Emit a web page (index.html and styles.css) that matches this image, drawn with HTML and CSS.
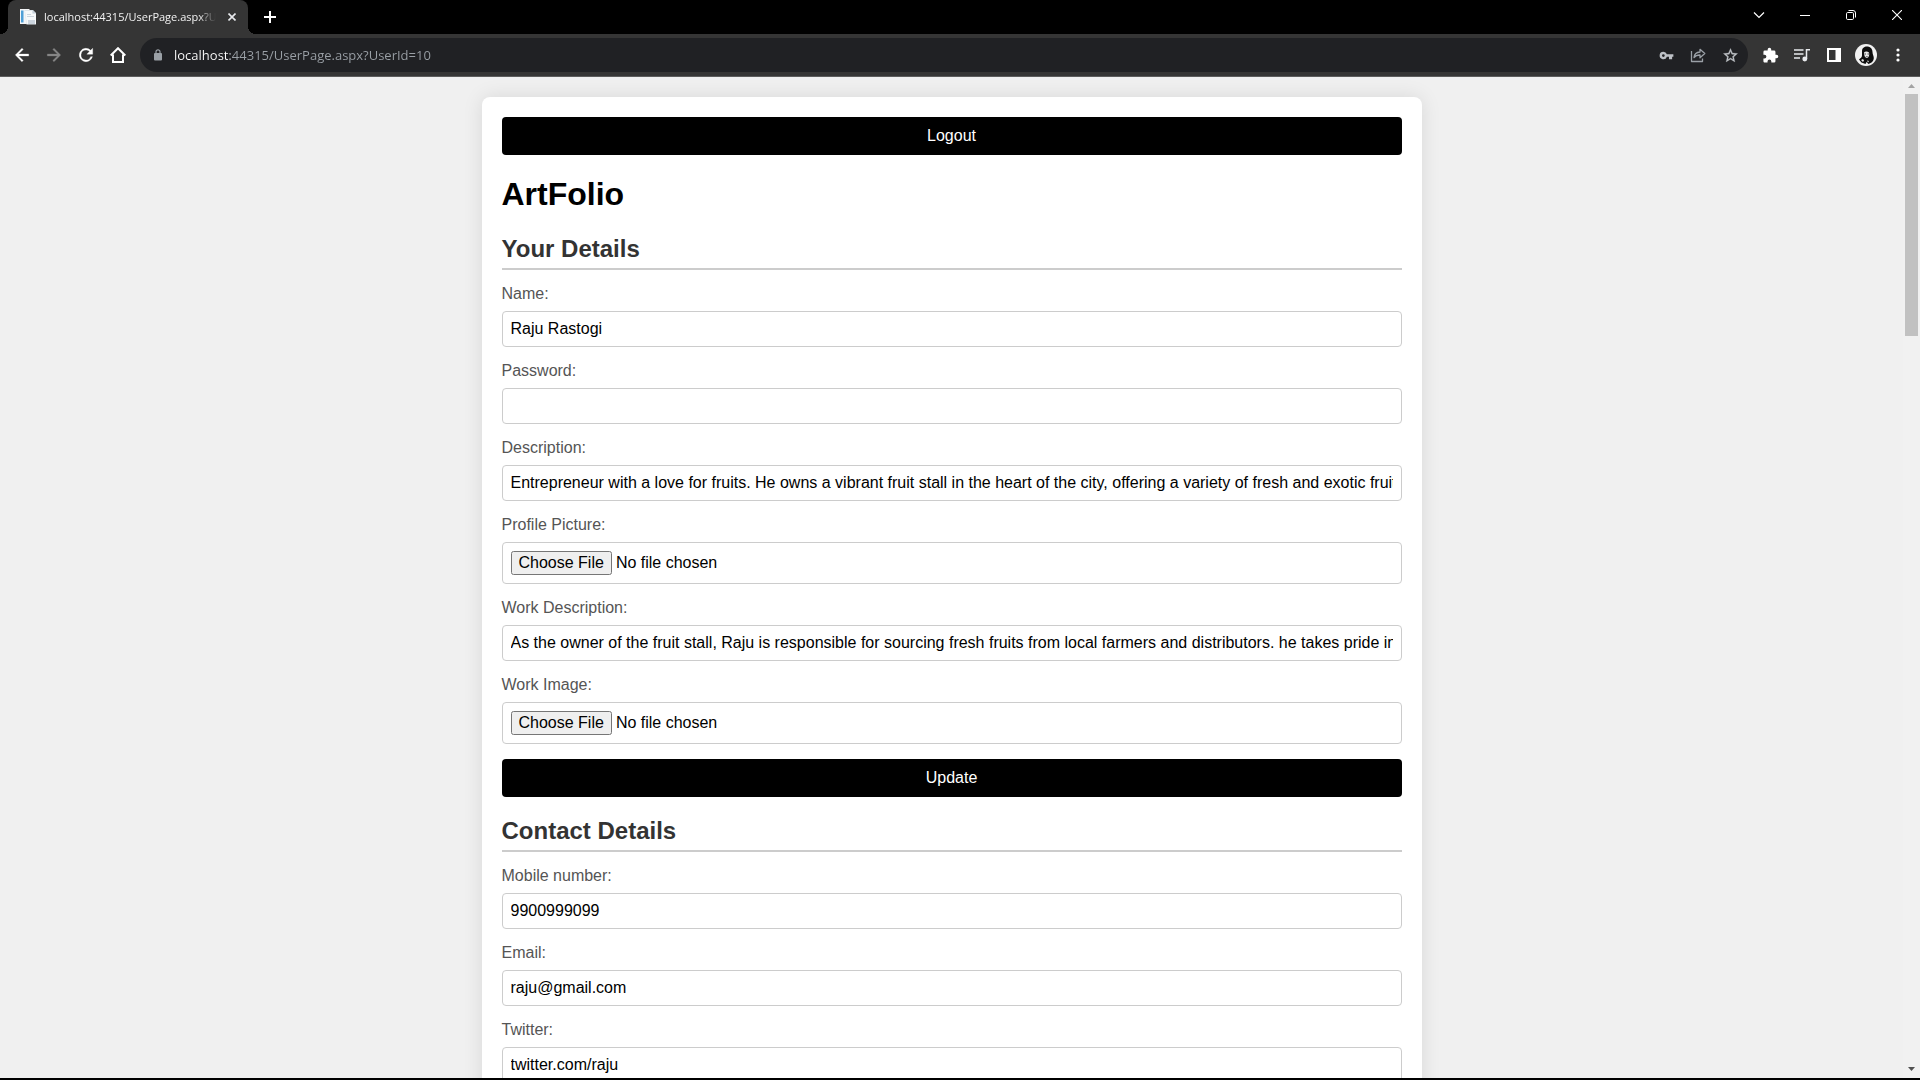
FILE: index.html
```html
<!DOCTYPE html>
<html lang="en">
<head>
<meta charset="utf-8">
<title>localhost:44315/UserPage.aspx?UserId=10</title>
<link rel="stylesheet" href="styles.css">
</head>
<body>
<header class="browser">
  <div class="tab-strip">
    <div class="tab">
      <svg class="favicon" width="16" height="16" viewBox="0 0 16 16"><path fill="#f3f5f7" d="M0 0h9.500v15H0z"/><path fill="#4f9fd6" d="M1 1.500h2.500v12H1z"/><path fill="#dfe5ea" d="M4.500 1h8.500l3 3v11.500h-9.500z"/><path fill="#f7f9fa" d="M5 2h7.500v2.500H16V15H7z"/><path fill="#b9c6d1" d="M12.500 1v3.500H16zM7 5h4v1H7zM7 7h7v1H7zM8 11h7v4H8z" opacity=".7"/></svg>
      <span class="tab-title">localhost:44315/UserPage.aspx?UserId=10</span>
      <button class="tab-close" aria-label="Close tab"><svg width="8" height="8" viewBox="0 0 8 8" fill="none" stroke="#e8eaed" stroke-width="1.600"><path d="M.5.5l7 7M7.500.5l-7 7"/></svg></button>
    </div>
    <button class="new-tab" aria-label="New tab"><svg width="12" height="12" viewBox="0 0 12 12" fill="none" stroke="#fff" stroke-width="2"><path d="M6 0v12M0 6h12"/></svg></button>
    <div class="window-controls">
      <button aria-label="Search tabs"><svg width="12" height="12" viewBox="0 0 12 12" fill="none" stroke="#fff" stroke-width="1.200"><path d="M1 3.500l5 5 5-5"/></svg></button>
      <button aria-label="Minimize"><svg width="10" height="10" viewBox="0 0 10 10" fill="none" stroke="#fff"><path d="M0 5.500h10"/></svg></button>
      <button aria-label="Restore"><svg width="10" height="10" viewBox="0 0 10 10" fill="none" stroke="#fff"><rect x=".5" y="2.500" width="7" height="7" rx="1.200"/><path d="M2.500.5H7A2.500 2.500 0 0 1 9.500 3v4.500"/></svg></button>
      <button aria-label="Close"><svg width="10" height="10" viewBox="0 0 10 10" fill="none" stroke="#fff" stroke-width="1.100"><path d="M0 0l10 10M10 0L0 10"/></svg></button>
    </div>
  </div>
  <nav class="toolbar">
    <button class="tool" aria-label="Back"><svg width="20" height="20" viewBox="0 0 24 24" fill="#fff" stroke="#fff" stroke-width=".4"><path d="M20 10.900H7.900l5.500-5.500L12 4l-8 8 8 8 1.400-1.400-5.500-5.500H20z"/></svg></button>
    <button class="tool" aria-label="Forward"><svg width="20" height="20" viewBox="0 0 24 24" fill="#868686" stroke="#868686" stroke-width=".4"><path d="M4 10.900h12.100l-5.500-5.500L12 4l8 8-8 8-1.400-1.400 5.500-5.500H4z"/></svg></button>
    <button class="tool" aria-label="Reload"><svg width="20" height="20" viewBox="0 0 24 24" fill="#fff"><path d="M17.650 6.350A8 8 0 1 0 19.730 14h-2.080A6 6 0 1 1 12 6c1.660 0 3.140.69 4.220 1.780L13 11h7V4z" stroke="#fff" stroke-width=".4"/></svg></button>
    <button class="tool" aria-label="Home"><svg width="16" height="16" viewBox="0 0 16 16" fill="none" stroke="#fff" stroke-width="2"><path d="M.7 8.500L8 1.200l7.300 7.300M3 7.500V15h10V7.500"/></svg></button>
    <div class="omnibox">
      <svg width="8" height="12" viewBox="0 0 8 12"><rect y="4" width="8" height="7.500" rx="1" fill="#9aa0a6"/><path d="M2 4.500V2.800a2 2 0 0 1 4 0v1.700" fill="none" stroke="#9aa0a6" stroke-width="1.200"/></svg>
      <input class="url" type="text" aria-label="Address" value="localhost:44315/UserPage.aspx?UserId=10">
      <button class="tool" aria-label="Passwords"><svg width="15" height="15" viewBox="0 0 24 24" fill="#bdc1c6"><path d="M12.650 10A6 6 0 0 0 7 6a6 6 0 1 0 5.650 8H16v4h5v-4h2v-4zM7 14.200a2.200 2.200 0 1 1 0-4.400 2.200 2.200 0 0 1 0 4.400z"/></svg></button>
      <button class="tool" aria-label="Share"><svg width="16" height="16" viewBox="0 0 16 16" fill="none" stroke="#9aa0a6" stroke-width="1.300"><path d="M1.500 4v10.500h11v-3M4 10.500c.4-3.500 2.500-5.300 6-5.500V2.300L14.800 6.500 10 10.700V8c-2.700 0-4.600.7-6 2.500z" stroke-linejoin="round"/></svg></button>
      <button class="tool" aria-label="Bookmark"><svg width="17" height="17" viewBox="0 0 24 24" fill="#bdc1c6" stroke="#bdc1c6" stroke-width=".4"><path d="M22 9.240l-7.190-.62L12 2 9.190 8.630 2 9.240l5.460 4.730L5.820 21 12 17.270 18.180 21l-1.630-7.030zM12 15.400l-3.760 2.270 1-4.280-3.320-2.880 4.380-.38L12 6.100l1.710 4.040 4.380.38-3.320 2.880 1 4.280z"/></svg></button>
    </div>
    <button class="tool" aria-label="Extensions"><svg width="17" height="17" viewBox="0 0 24 24" fill="#fff"><path d="M20.500 11H19V7a2 2 0 0 0-2-2h-4V3.500a2.500 2.500 0 0 0-5 0V5H4a2 2 0 0 0-2 2v3.800h1.500a2.700 2.700 0 0 1 0 5.400H2V20c0 1.100.9 2 2 2h3.800v-1.500a2.700 2.700 0 0 1 5.400 0V22H17a2 2 0 0 0 2-2v-4h1.500a2.500 2.500 0 0 0 0-5z"/></svg></button>
    <button class="tool" aria-label="Media controls"><svg width="16" height="14" viewBox="0 0 16 14" fill="none" stroke="#e8eaed" stroke-width="1.500"><path d="M0 2h9.500M0 6h9.500M0 10h6M12.500 11V1.800H16"/><circle cx="10.800" cy="11" r="1.700" fill="#e8eaed"/></svg></button>
    <button class="tool" aria-label="Side panel"><svg width="14" height="14" viewBox="0 0 14 14"><path fill="#fff" fill-rule="evenodd" d="M0 0h14v14H0zM2 2v10h6.500V2z"/></svg></button>
    <button class="tool" aria-label="Profile"><svg width="22" height="22" viewBox="0 0 22 22"><circle cx="11" cy="11" r="11" fill="#f1f1f1"/><path fill="#0c0c0c" d="M7 7c0-3.500 3-5 6-4.500 3 .5 4.500 3 4.500 5.500 0 2 .8 3 1.200 5 .4 2.500-.7 4.500-2.200 5.500l-3 1.500-2-2-1 2-4-1.500-2.500-3c1.500-1.500 3-2 3-4z"/><path fill="#e6e6e6" d="M9 8.500c1-1.500 3.500-1.500 5 0 .7 2.500 0 5-2 5.500-2 0-3-2.500-3-5.500zM6 16l2-1 1 1.500-1 1.500zM12 16.500l2 .5-1 1.500z"/><path fill="#444" d="M9.500 9.500h1.500v1H9.500zM12.500 9.500H14v1h-1.500zM10.500 12h2.500l-1 1z"/></svg></button>
    <button class="tool" aria-label="Menu"><svg width="4" height="14" viewBox="0 0 4 14" fill="#fff"><circle cx="2" cy="2" r="1.600"/><circle cx="2" cy="7" r="1.600"/><circle cx="2" cy="12" r="1.600"/></svg></button>
  </nav>
</header>
<div class="viewport">
  <main class="page">
    <form class="card">
      <button class="action" type="button">Logout</button>
      <h1>ArtFolio</h1>
      <section>
        <h2>Your Details</h2>
        <label for="name">Name:</label>
        <input class="field" id="name" type="text" value="Raju Rastogi">
        <label for="password">Password:</label>
        <input class="field" id="password" type="password">
        <label for="description">Description:</label>
        <input class="field" id="description" type="text" value="Entrepreneur with a love for fruits. He owns a vibrant fruit stall in the heart of the city, offering a variety of fresh and exotic fruits">
        <label for="picture">Profile Picture:</label>
        <input class="field" id="picture" type="file">
        <label for="work">Work Description:</label>
        <input class="field" id="work" type="text" value="As the owner of the fruit stall, Raju is responsible for sourcing fresh fruits from local farmers and distributors. he takes pride in">
        <label for="work-image">Work Image:</label>
        <input class="field" id="work-image" type="file">
        <button class="action" type="button">Update</button>
      </section>
      <section>
        <h2>Contact Details</h2>
        <label for="mobile">Mobile number:</label>
        <input class="field" id="mobile" type="text" value="9900999099">
        <label for="email">Email:</label>
        <input class="field" id="email" type="text" value="raju@gmail.com">
        <label for="twitter">Twitter:</label>
        <input class="field" id="twitter" type="text" value="twitter.com/raju">
      </section>
    </form>
  </main>
  <div class="scrollbar">
    <svg width="7" height="4" viewBox="0 0 7 4" fill="#a3a3a3"><path d="M0 4l3.500-4L7 4z"/></svg>
    <div class="track"><div class="thumb"></div></div>
    <svg width="7" height="4" viewBox="0 0 7 4" fill="#505050"><path d="M0 0h7L3.500 4z"/></svg>
  </div>
</div>
</body>
</html>
```
FILE: styles.css
```css
* { box-sizing: border-box; }

body {
  margin: 0;
  height: 100vh;
  display: flex;
  flex-direction: column;
  overflow: hidden;
  background: #000;
  border-bottom: 2px solid #000;
  font-family: "Liberation Sans", Arial, sans-serif;
  font-size: 16px;
  line-height: 18px;
}

button, input { font: inherit; }

.browser {
  flex: none;
  font-family: "Open Sans", "Segoe UI", sans-serif;
}

.browser button {
  display: flex;
  align-items: center;
  justify-content: center;
  padding: 0;
  border: 0;
  background: none;
}

.tab-strip {
  display: flex;
  height: 34px;
  padding-left: 8px;
}

.tab {
  position: relative;
  display: flex;
  align-items: center;
  width: 240px;
  padding: 0 8px 0 12px;
  border-radius: 8px 8px 0 0;
  background: #353535;
}

.tab::before,
.tab::after {
  content: "";
  position: absolute;
  bottom: 0;
  width: 8px;
  height: 8px;
}

.tab::before {
  left: -8px;
  background: radial-gradient(circle at 0 0, #000 8px, #353535 8px);
}

.tab::after {
  right: -8px;
  background: radial-gradient(circle at 100% 0, #000 8px, #353535 8px);
}

.favicon { flex: none; margin-right: 8px; }

.tab-title {
  flex: 1;
  overflow: hidden;
  white-space: nowrap;
  font-size: 11px;
  color: #f1f1f1;
  -webkit-mask-image: linear-gradient(to right, #000 90%, transparent);
  mask-image: linear-gradient(to right, #000 90%, transparent);
}

.tab-close { width: 16px; height: 16px; margin-left: 8px; }

.new-tab { width: 28px; margin-left: 8px; }

.window-controls { display: flex; height: 29px; margin-left: auto; }

.window-controls button { width: 46px; }

.toolbar {
  display: flex;
  align-items: center;
  height: 43px;
  padding: 0 6px;
  border-bottom: 1px solid #5c5c5c;
  background: #353535;
}

.tool { flex: none; width: 32px; height: 32px; }

.omnibox {
  flex: 1;
  display: flex;
  align-items: center;
  height: 34px;
  margin: 0 6px;
  padding: 0 2px 0 14px;
  border-radius: 17px;
  background: #202124;
}

.url {
  flex: 1;
  min-width: 0;
  margin-left: 12px;
  padding: 0;
  border: 0;
  outline: 0;
  font-size: 13px;
  color: transparent;
  background: linear-gradient(to right, #fff 56px, #9aa0a6 56px);
  -webkit-background-clip: text;
  background-clip: text;
}

.viewport {
  flex: 1;
  min-height: 0;
  display: flex;
}

.page {
  flex: 1;
  overflow: hidden;
  padding: 20px;
  background: #f0f0f0;
}

.card {
  max-width: 940px;
  margin: 0 auto;
  padding: 20px;
  border-radius: 8px;
  background: #fff;
  box-shadow: 0 0 20px rgba(0, 0, 0, 0.1);
}

.action {
  display: block;
  width: 100%;
  padding: 10px;
  border: 0;
  border-radius: 4px;
  background: #000;
  color: #fff;
}

h1 {
  margin: 21px 0 23px;
  font-size: 32px;
  line-height: 36px;
}

h2 {
  margin: 20px 0 15px;
  padding-bottom: 5px;
  border-bottom: 2px solid #ccc;
  font-size: 24px;
  line-height: 28px;
  color: #333;
}

label {
  display: block;
  margin-bottom: 8px;
  color: #555;
}

.field {
  display: block;
  width: 100%;
  height: 36px;
  margin: 0 0 15px;
  padding: 8px;
  border: 1px solid #ccc;
  border-radius: 4px;
  background: #fff;
  color: #000;
}

.field[type="file"] { height: 42px; }

.scrollbar {
  display: flex;
  flex-direction: column;
  align-items: center;
  width: 17px;
  padding: 7px 0;
  background: #f1f1f1;
}

.track {
  flex: 1;
  align-self: stretch;
  margin: 6px 2px;
}

.thumb { height: 25%; background: #c1c1c1; }
```
